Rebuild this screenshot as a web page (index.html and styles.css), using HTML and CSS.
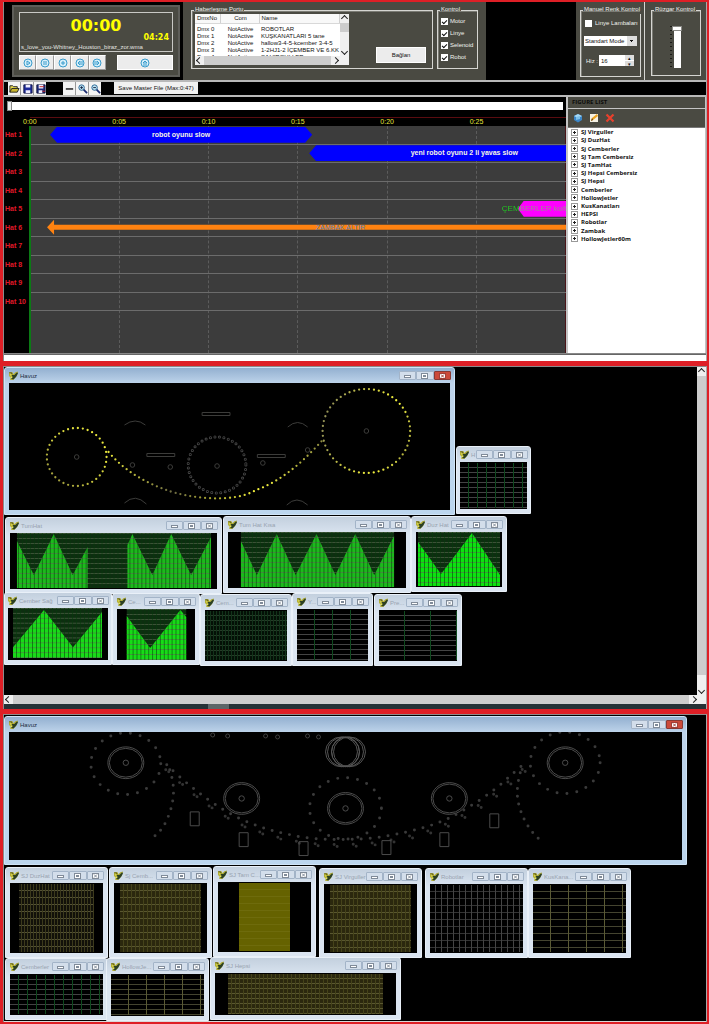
FILE: index.html
```html
<!DOCTYPE html>
<html lang="tr">
<head>
<meta charset="utf-8">
<meta name="viewport" content="width=device-width, initial-scale=1">
<title>Havuz Kontrol</title>
<link rel="stylesheet" href="styles.css">
</head>
<body>
<svg class="defs" aria-hidden="true">
  <symbol id="app" viewBox="0 0 10 9"><path d="M0 1l4 0 1 2 2-2 3-1-1 4-2 3-3 3-3-1 1-2-2-2z" fill="#b3af35"/><path d="M3 4l3 0 3-3 1 1-2 4-3 3-3-1 2-1z" fill="#2c4024"/><path d="M0 1l3 0 1 2-2 1z" fill="#6b6a1c"/><path d="M1 2l2 1-1 2zM2 6l2 0-2 2z" fill="#f0ee62"/></symbol>
  <symbol id="min" viewBox="0 0 7 6"><rect x="0.5" y="2.5" width="6" height="2" fill="#fff" stroke="currentColor"/></symbol>
  <symbol id="max" viewBox="0 0 7 6"><rect x="0.5" y="0.5" width="6" height="5" fill="#fff" stroke="currentColor"/><rect x="2.5" y="2.5" width="2" height="1" fill="none" stroke="currentColor"/></symbol>
  <symbol id="cls" viewBox="0 0 7 6"><rect x="0.5" y="0.5" width="6" height="5" fill="#fff" stroke="currentColor"/><path d="M2 1.500l3 3m0-3l-3 3" stroke="currentColor"/></symbol>
  <pattern id="mesh" width="4" height="5" patternUnits="userSpaceOnUse"><path d="M0 .5h4" stroke="#5a6a50" stroke-opacity=".6"/><path d="M.5 0v5" stroke="#063a0a" stroke-opacity=".55"/></pattern>
</svg>

<section class="screen editor">
  <header class="top">
    <div class="player-wrap">
      <div class="player">
        <div class="display">
          <output class="clock">00:00</output>
          <output class="total">04:24</output>
          <p class="track">s_love_you-Whitney_Houston_biraz_zor.wma</p>
        </div>
        <div class="transport">
          <div class="keys">
            <button aria-label="Play"><svg viewBox="0 0 10 10"><circle cx="5" cy="5" r="4"/><path d="M4 3l3 2-3 2z"/></svg></button>
            <button aria-label="Pause"><svg viewBox="0 0 10 10"><circle cx="5" cy="5" r="4"/><path d="M4 3v4M6 3v4"/></svg></button>
            <button aria-label="Stop"><svg viewBox="0 0 10 10"><circle cx="5" cy="5" r="4"/><path d="M4 4h2v2H4z"/></svg></button>
            <button aria-label="Previous"><svg viewBox="0 0 10 10"><circle cx="5" cy="5" r="4"/><path d="M5 3L3 5l2 2zM7 3v4"/></svg></button>
            <button aria-label="Next"><svg viewBox="0 0 10 10"><circle cx="5" cy="5" r="4"/><path d="M5 3l2 2-2 2zM3 3v4"/></svg></button>
          </div>
          <button class="eject" aria-label="Open track"><svg viewBox="0 0 10 10"><circle cx="5" cy="5" r="4"/><path d="M3 5l2-2 2 2zM3 7h4"/></svg></button>
        </div>
      </div>
    </div>

    <div class="panel comms">
      <fieldset class="group port">
        <legend>Haberleşme Portu</legend>
        <div class="port-body">
          <div class="listview">
            <div class="list-main">
              <table>
                <thead><tr><th class="c-no">DmxNo</th><th class="c-com">Com</th><th>Name</th></tr></thead>
                <tbody>
                  <tr><td>Dmx 0</td><td class="mid">NotActive</td><td>ROBOTLAR</td></tr>
                  <tr><td>Dmx 1</td><td class="mid">NotActive</td><td>KUŞKANATLARI 5 tane</td></tr>
                  <tr><td>Dmx 2</td><td class="mid">NotActive</td><td>hallow3-4-5-kcember 3-4-5</td></tr>
                  <tr><td>Dmx 3</td><td class="mid">NotActive</td><td>1-2HJ1-2 İÇEMBER VE 6.KK</td></tr>
                  <tr><td>Dmx 4</td><td class="mid">NotActive</td><td>SJ VIRGULLER</td></tr>
                </tbody>
              </table>
              <div class="vbar"><button class="up" aria-label="Up"></button><span class="vthumb"></span><button class="down" aria-label="Down"></button></div>
            </div>
            <div class="hbar"><button class="left" aria-label="Left"></button><span class="hthumb"></span><button class="right" aria-label="Right"></button></div>
          </div>
          <button class="connect">Bağlan</button>
        </div>
      </fieldset>
      <fieldset class="group control">
        <legend>Kontrol</legend>
        <label><input type="checkbox" checked>Motor</label>
        <label><input type="checkbox" checked>Linye</label>
        <label><input type="checkbox" checked>Selenoid</label>
        <label><input type="checkbox" checked>Robot</label>
      </fieldset>
    </div>

    <div class="panel manual">
      <fieldset class="group colour">
        <legend>Manuel Renk Kontrol</legend>
        <label><input type="checkbox">Linye Lambaları</label>
        <select aria-label="Mode"><option>Standart Mode</option></select>
        <div class="speed"><label for="hiz">Hiz :</label><span class="spin"><input id="hiz" type="text" value="16"><span class="steps"><button aria-label="Increase">▴</button><button aria-label="Decrease">▾</button></span></span></div>
      </fieldset>
    </div>
    <div class="panel wind">
      <fieldset class="group fan">
        <legend>Rüzgar Kontrol</legend>
        <span class="ticks"></span><input type="range" value="100" aria-label="Rüzgar Kontrol">
      </fieldset>
    </div>
  </header>

  <nav class="tools">
    <div class="toolset">
      <button aria-label="Open"><svg viewBox="0 0 12 12"><path d="M1 10V3h3l1 1h4v2" fill="#e6d94a" stroke="#222"/><path d="M1 10l2-4h8l-2 4z" fill="#c9b62e" stroke="#222"/></svg></button>
      <button aria-label="Save"><svg viewBox="0 0 12 12"><path d="M2 2h9v9H2z" fill="#1c2a9c" stroke="#111540"/><path d="M4 2h5v3H4zM4 8h5v3H4z" fill="#eef"/></svg></button>
      <button aria-label="Save as"><svg viewBox="0 0 12 12"><path d="M2 2h9v9H2z" fill="#1c2a7c" stroke="#111540"/><path d="M4 2h5v4H4zM4 8h4v3H4z" fill="#eef"/><path d="M5 4h5M8 9h3" stroke="#c22"/></svg></button>
    </div>
    <div class="toolset">
      <button aria-label="Line"><svg viewBox="0 0 12 12"><path d="M2 6.500h8" stroke="#111" stroke-width="1.500"/></svg></button>
      <button aria-label="Zoom in"><svg viewBox="0 0 12 12"><path d="M7 7l4 4" stroke="#1a2a70" stroke-width="2"/><circle cx="5" cy="5" r="3" fill="#bfe3f2" stroke="#23608f"/><path d="M3.500 5h3M5 3.500v3" stroke="#124"/></svg></button>
      <button aria-label="Zoom out"><svg viewBox="0 0 12 12"><path d="M7 7l4 4" stroke="#1a2a70" stroke-width="2"/><circle cx="5" cy="5" r="3" fill="#bfe3f2" stroke="#23608f"/><path d="M3.500 5h3" stroke="#124"/></svg></button>
    </div>
    <button class="save-master">Save Master File (Max:0:47)</button>
  </nav>

  <div class="work">
    <div class="timeline">
      <input class="seek" type="range" value="0" aria-label="Position">
      <div class="ruler"><span>0:00</span><span>0:05</span><span>0:10</span><span>0:15</span><span>0:20</span><span>0:25</span></div>
      <div class="lanes">
        <ol class="names"><li>Hat 1</li><li>Hat 2</li><li>Hat 3</li><li>Hat 4</li><li>Hat 5</li><li>Hat 6</li><li>Hat 7</li><li>Hat 8</li><li>Hat 9</li><li>Hat 10</li></ol>
        <div class="tracks">
          <div class="cols"><i></i><i></i><i></i><i></i><i></i><i></i></div>
          <div class="rows">
            <div class="row"><div class="clip blue first">robot oyunu slow</div></div>
            <div class="row"><div class="clip blue second">yeni robot oyunu 2 li yavas slow</div></div>
            <div class="row"></div>
            <div class="row"></div>
            <div class="row"><div class="clip-name">ÇEMBERLER kolt</div><div class="clip pink"></div></div>
            <div class="row"><div class="arrow"><span>ZAMBAK ALTIR</span></div></div>
            <div class="row"></div>
            <div class="row"></div>
            <div class="row"></div>
            <div class="row"></div>
          </div>
        </div>
      </div>
    </div>
    <aside class="figures">
      <h2>FIGURE LIST</h2>
      <div class="fig-tools">
        <button aria-label="Add"><svg viewBox="0 0 10 10"><path d="M1 3l4-2 4 2v4L5 9.500 1 7z" fill="#3b86c8"/><path d="M1 3l4-2 4 2-4 2z" fill="#a8daf5"/><path d="M3 4v3l4-1V3z" fill="#7cc0ea"/></svg></button>
        <button aria-label="Edit"><svg viewBox="0 0 10 10"><path d="M1 1h8v8H1z" fill="#f6f2e4"/><path d="M2 8l1-3 5-4 1 2-5 4z" fill="#eda321"/><path d="M2 8l1-3 1 2z" fill="#5a3a12"/></svg></button>
        <button aria-label="Delete"><svg viewBox="0 0 10 10"><path d="M1.500 1.500l7 7m0-7l-7 7" stroke="#e8402c" stroke-width="2.200"/></svg></button>
      </div>
      <ul class="tree">
        <li>SJ Virguller</li><li>SJ DuzHat</li><li>Sj Cemberler</li><li>SJ Tam Cembersiz</li><li>SJ TamHat</li><li>SJ Hepsi Cembersiz</li><li>SJ Hepsi</li><li>Cemberler</li><li>HollowJetler</li><li>KusKanatları</li><li>HEPSI</li><li>Robotlar</li><li>Zambak</li><li>HollowJetler60m</li>
      </ul>
    </aside>
  </div>
  <div class="white-strip"></div>
</section>

<section class="screen mdi-a">
  <div class="mdi-row">
    <div class="desk desk-a">
      <article class="win active a-pool">
        <header><svg class="ico"><use href="#app"/></svg><h3>Havuz</h3><div class="wb"><button aria-label="Minimize"><svg><use href="#min"/></svg></button><button aria-label="Maximize"><svg><use href="#max"/></svg></button><button class="x" aria-label="Close"><svg><use href="#cls"/></svg></button></div></header>
        <svg class="pane" viewBox="0 0 443 127" fill="none" stroke="#3c3c3a" preserveAspectRatio="none">
          <defs>
            <linearGradient id="ga" x1="0" y1="1" x2="1" y2="0"><stop offset="0" stop-color="#8f8c3c"/><stop offset=".6" stop-color="#d8d63c"/><stop offset="1" stop-color="#f4f23c"/></linearGradient>
            <linearGradient id="gb"><stop offset="0" stop-color="#e6e43a"/><stop offset=".3" stop-color="#6c6a42"/><stop offset=".48" stop-color="#a8a62e"/><stop offset=".7" stop-color="#f4f23c"/><stop offset="1" stop-color="#8a8840"/></linearGradient>
            <linearGradient id="gc" x1="0" x2="1" y1=".2" y2=".5"><stop offset="0" stop-color="#8a8858"/><stop offset=".5" stop-color="#d8d640"/><stop offset=".8" stop-color="#f4f23c"/><stop offset="1" stop-color="#b8b640"/></linearGradient>
          </defs>
          <g stroke-width="2.300" stroke-linecap="round" stroke-dasharray="0 5">
            <ellipse cx="68" cy="74" rx="30" ry="29" stroke="url(#ga)"/>
            <ellipse cx="359" cy="48" rx="44" ry="42" stroke="url(#gc)"/>
            <path d="M100 69C116 88 136 99 158 107S225 121 248 107C275 98 298 76 316 56" stroke="url(#gb)"/>
          </g>
          <g stroke-linecap="round" stroke-dasharray="0 4.550"><ellipse cx="209" cy="82" rx="29" ry="28" stroke="#4a4a4a" stroke-width="3"/><ellipse cx="209" cy="82" rx="29" ry="28" stroke="#000" stroke-width="1.400"/></g>
          <g><circle cx="68" cy="74" r="2.300"/><circle cx="124" cy="82" r="2.300"/><circle cx="162" cy="84" r="2.300"/><circle cx="209" cy="83" r="2.300"/><circle cx="255" cy="80" r="2.300"/><circle cx="300" cy="67" r="2.300"/><circle cx="359" cy="48" r="2.300"/></g>
          <path d="M194 29.500h28v3h-28zM138.500 70.500h28v3h-28zM249.500 71.500h28v3h-28zM116 42q11-8 21 0M280 44q10-9 20 0M116 120q11-10 22 1M279 122q10-10 21 0"/>
        </svg>
      </article>
      <article class="win a-mini">
        <header><svg class="ico"><use href="#app"/></svg><h3>H</h3><div class="wb"><button aria-label="Minimize"><svg><use href="#min"/></svg></button><button aria-label="Maximize"><svg><use href="#max"/></svg></button><button aria-label="Close"><svg><use href="#cls"/></svg></button></div></header>
        <div class="pane"><div class="mesh m-green9"></div></div>
      </article>
      <article class="win a-tum">
        <header><svg class="ico"><use href="#app"/></svg><h3>TumHat</h3><div class="wb"><button aria-label="Minimize"><svg><use href="#min"/></svg></button><button aria-label="Maximize"><svg><use href="#max"/></svg></button><button aria-label="Close"><svg><use href="#cls"/></svg></button></div></header>
        <svg class="pane" viewBox="0 0 208 56" preserveAspectRatio="none"><path d="M7 0h195v55H7z" fill="#0d2e10"/><path d="M7 55V8l17 34L44 1l19 41 15-28v41zM118 55V12l5-11 20 41 19-41 20 41 20-38v51z" fill="#1cba1c"/><path d="M7 0h195v55H7z" fill="url(#mesh)"/></svg>
      </article>
      <article class="win a-kisa">
        <header><svg class="ico"><use href="#app"/></svg><h3>Tum Hat Kısa</h3><div class="wb"><button aria-label="Minimize"><svg><use href="#min"/></svg></button><button aria-label="Maximize"><svg><use href="#max"/></svg></button><button aria-label="Close"><svg><use href="#cls"/></svg></button></div></header>
        <svg class="pane" viewBox="0 0 179 56" preserveAspectRatio="none"><path d="M13 0h154v55H13z" fill="#0d2e10"/><path d="M13 55V9l16 34L49 2l19 41L89 2l19 41 20-41 19 41 20-39v51z" fill="#1cba1c"/><path d="M13 0h154v55H13z" fill="url(#mesh)"/></svg>
      </article>
      <article class="win a-duz">
        <header><svg class="ico"><use href="#app"/></svg><h3>Duz Hat</h3><div class="wb"><button aria-label="Minimize"><svg><use href="#min"/></svg></button><button aria-label="Maximize"><svg><use href="#max"/></svg></button><button aria-label="Close"><svg><use href="#cls"/></svg></button></div></header>
        <svg class="pane" viewBox="0 0 86 55" preserveAspectRatio="none"><path d="M2 0h82v54H2z" fill="#0d2e10"/><path d="M2 54V10l23 32L56 1l28 42v11z" fill="#0be30f"/><path d="M2 0h82v54H2z" fill="url(#mesh)"/></svg>
      </article>
      <article class="win a-sag">
        <header><svg class="ico"><use href="#app"/></svg><h3>Cember Sağ</h3><div class="wb"><button aria-label="Minimize"><svg><use href="#min"/></svg></button><button aria-label="Maximize"><svg><use href="#max"/></svg></button><button aria-label="Close"><svg><use href="#cls"/></svg></button></div></header>
        <svg class="pane" viewBox="0 0 100 53" preserveAspectRatio="none"><path d="M5 0h89v51H5z" fill="#0d2e10"/><path d="M5 51V40L36 2l29 38L94 4v47z" fill="#17dc17"/><path d="M5 0h89v51H5z" fill="url(#mesh)"/></svg>
      </article>
      <article class="win a-ce">
        <header><svg class="ico"><use href="#app"/></svg><h3>Ce...</h3><div class="wb"><button aria-label="Minimize"><svg><use href="#min"/></svg></button><button aria-label="Maximize"><svg><use href="#max"/></svg></button><button aria-label="Close"><svg><use href="#cls"/></svg></button></div></header>
        <svg class="pane" viewBox="0 0 80 51" preserveAspectRatio="none"><path d="M10 0h61v51H10z" fill="#0d2e10"/><path d="M10 51V7l24 32L65 1l6 7v43z" fill="#17dc17"/><path d="M10 0h61v51H10z" fill="url(#mesh)"/></svg>
      </article>
      <article class="win a-cem">
        <header><svg class="ico"><use href="#app"/></svg><h3>Cem...</h3><div class="wb"><button aria-label="Minimize"><svg><use href="#min"/></svg></button><button aria-label="Maximize"><svg><use href="#max"/></svg></button><button aria-label="Close"><svg><use href="#cls"/></svg></button></div></header>
        <div class="pane"><div class="mesh m-dense"></div></div>
      </article>
      <article class="win a-y">
        <header><svg class="ico"><use href="#app"/></svg><h3>Y...</h3><div class="wb"><button aria-label="Minimize"><svg><use href="#min"/></svg></button><button aria-label="Maximize"><svg><use href="#max"/></svg></button><button aria-label="Close"><svg><use href="#cls"/></svg></button></div></header>
        <div class="pane"><div class="mesh m-green18"></div></div>
      </article>
      <article class="win a-pre">
        <header><svg class="ico"><use href="#app"/></svg><h3>Pre...</h3><div class="wb"><button aria-label="Minimize"><svg><use href="#min"/></svg></button><button aria-label="Maximize"><svg><use href="#max"/></svg></button><button aria-label="Close"><svg><use href="#cls"/></svg></button></div></header>
        <div class="pane"><div class="mesh m-green26"></div></div>
      </article>
    </div>
    <div class="vbar"><button class="up" aria-label="Up"></button><span class="vthumb tall"></span><button class="down" aria-label="Down"></button></div>
  </div>
  <div class="hbar wide"><button class="left" aria-label="Left"></button><span class="hthumb"></span><button class="right" aria-label="Right"></button></div>
  <div class="taskbar"></div>
</section>

<section class="screen mdi-b">
  <div class="desk desk-b">
    <article class="win active b-pool">
      <header><svg class="ico"><use href="#app"/></svg><h3>Havuz</h3><div class="wb"><button aria-label="Minimize"><svg><use href="#min"/></svg></button><button aria-label="Maximize"><svg><use href="#max"/></svg></button><button class="x" aria-label="Close"><svg><use href="#cls"/></svg></button></div></header>
      <svg class="pane" viewBox="0 0 674 129" fill="none" stroke="#4c4c4c" preserveAspectRatio="none">
        <defs>
          <g id="ring"><ellipse rx="18" ry="16"/><ellipse rx="16.500" ry="14.500"/><circle r="2.700"/></g>
          <path id="sweep" d="M158 33C166 41 176 50 186 58S215 80 235 89 270 101 288 105 350 110 377 105 425 95 444 85 486 60 501 45L516 32"/>
        </defs>
        <use href="#ring" x="117" y="31"/><use href="#ring" x="233" y="67"/><use href="#ring" x="337" y="77"/><use href="#ring" x="441" y="67"/><use href="#ring" x="557" y="31"/>
        <g stroke="#565656"><ellipse cx="333" cy="20" rx="16" ry="15"/><ellipse cx="335" cy="20" rx="16" ry="15"/><ellipse cx="337" cy="20" rx="14" ry="15"/><ellipse cx="339" cy="20" rx="16" ry="15"/><ellipse cx="341" cy="20" rx="16" ry="15"/></g>
        <g stroke="#3a3a3a" stroke-width="3" stroke-linecap="round" stroke-dasharray="0 10">
          <ellipse cx="117" cy="32" rx="35" ry="31"/><ellipse cx="557" cy="31" rx="35" ry="31"/><ellipse cx="337" cy="77" rx="36" ry="31"/>
          <use href="#sweep" stroke-dasharray="0 9"/>
          <path d="M161 38C166 54 166 66 161 81S150 102 142 108M512 41C507 60 509 70 513 81S524 102 531 108" stroke-dasharray="0 8"/>
        </g>
        <g stroke="#333" stroke-width="3" stroke-linecap="round"><use href="#sweep" y="5" x="-1" stroke-dasharray="0 19"/><use href="#sweep" y="7" x="2" stroke-dasharray="0 19"/></g>
        <path d="M181.500 80.500h9v14h-9zM230.500 101.500h9v14h-9zM290.500 110.500h9v14h-9zM373.500 109.500h9v14h-9zM431.500 101.500h9v14h-9zM481.500 82.500h9v14h-9z"/>
        <g stroke="#3f3f3f"><circle cx="204" cy="3" r="2"/><circle cx="219" cy="4" r="2"/><circle cx="257" cy="4" r="2"/><circle cx="269" cy="5" r="2"/><circle cx="299" cy="4" r="2"/><circle cx="310" cy="5" r="2"/></g>
      </svg>
    </article>
    <article class="win b-duz">
      <header><svg class="ico"><use href="#app"/></svg><h3>SJ DuzHat</h3><div class="wb"><button aria-label="Minimize"><svg><use href="#min"/></svg></button><button aria-label="Maximize"><svg><use href="#max"/></svg></button><button aria-label="Close"><svg><use href="#cls"/></svg></button></div></header>
      <div class="pane in10"><div class="mesh m-olive3"></div></div>
    </article>
    <article class="win b-cemb">
      <header><svg class="ico"><use href="#app"/></svg><h3>Sj Cemb...</h3><div class="wb"><button aria-label="Minimize"><svg><use href="#min"/></svg></button><button aria-label="Maximize"><svg><use href="#max"/></svg></button><button aria-label="Close"><svg><use href="#cls"/></svg></button></div></header>
      <div class="pane in6"><div class="mesh m-olive"></div></div>
    </article>
    <article class="win b-tam">
      <header><svg class="ico"><use href="#app"/></svg><h3>SJ Tam C...</h3><div class="wb"><button aria-label="Minimize"><svg><use href="#min"/></svg></button><button aria-label="Maximize"><svg><use href="#max"/></svg></button><button aria-label="Close"><svg><use href="#cls"/></svg></button></div></header>
      <div class="pane in21"><div class="mesh m-solid"></div></div>
    </article>
    <article class="win b-vir">
      <header><svg class="ico"><use href="#app"/></svg><h3>SJ Virguller</h3><div class="wb"><button aria-label="Minimize"><svg><use href="#min"/></svg></button><button aria-label="Maximize"><svg><use href="#max"/></svg></button><button aria-label="Close"><svg><use href="#cls"/></svg></button></div></header>
      <div class="pane in6"><div class="mesh m-olive"></div></div>
    </article>
    <article class="win b-rob">
      <header><svg class="ico"><use href="#app"/></svg><h3>Robotlar</h3><div class="wb"><button aria-label="Minimize"><svg><use href="#min"/></svg></button><button aria-label="Maximize"><svg><use href="#max"/></svg></button><button aria-label="Close"><svg><use href="#cls"/></svg></button></div></header>
      <div class="pane"><div class="mesh m-gray6"></div></div>
    </article>
    <article class="win b-kus">
      <header><svg class="ico"><use href="#app"/></svg><h3>KusKana...</h3><div class="wb"><button aria-label="Minimize"><svg><use href="#min"/></svg></button><button aria-label="Maximize"><svg><use href="#max"/></svg></button><button aria-label="Close"><svg><use href="#cls"/></svg></button></div></header>
      <div class="pane"><div class="mesh m-olive18"></div></div>
    </article>
    <article class="win b-cem">
      <header><svg class="ico"><use href="#app"/></svg><h3>Cemberler</h3><div class="wb"><button aria-label="Minimize"><svg><use href="#min"/></svg></button><button aria-label="Maximize"><svg><use href="#max"/></svg></button><button aria-label="Close"><svg><use href="#cls"/></svg></button></div></header>
      <div class="pane"><div class="mesh m-green9"></div></div>
    </article>
    <article class="win b-hol">
      <header><svg class="ico"><use href="#app"/></svg><h3>HollowJe...</h3><div class="wb"><button aria-label="Minimize"><svg><use href="#min"/></svg></button><button aria-label="Maximize"><svg><use href="#max"/></svg></button><button aria-label="Close"><svg><use href="#cls"/></svg></button></div></header>
      <div class="pane"><div class="mesh m-olive18 low"></div></div>
    </article>
    <article class="win b-hep">
      <header><svg class="ico"><use href="#app"/></svg><h3>SJ Hepsi</h3><div class="wb"><button aria-label="Minimize"><svg><use href="#min"/></svg></button><button aria-label="Maximize"><svg><use href="#max"/></svg></button><button aria-label="Close"><svg><use href="#cls"/></svg></button></div></header>
      <div class="pane in13"><div class="mesh m-olive low"></div></div>
    </article>
  </div>
  <div class="base-strip"></div>
</section>
</body>
</html>
```
FILE: styles.css
```css
*{box-sizing:border-box}
body{margin:0;padding:2px 2px 1px 3px;background:#de1f26;font:6px/8px "Liberation Sans",Arial,sans-serif;color:#111;display:flex;flex-direction:column;gap:5px}
button,input,select{font:inherit;margin:0;padding:0;border:0;border-radius:0;color:inherit}
button{display:flex;align-items:center;justify-content:center}
h2,h3,p,ol,ul{margin:0;padding:0;list-style:none;font:inherit}
.defs{position:absolute;width:0;height:0}
.screen{border-left:1px solid #8b8b8b;border-right:1px solid #a9a9a9;background:#000}

/* top panels */
.top{display:flex;height:78px}
.player-wrap{width:179px;padding:3px 3px 3px 8px}
.player{height:72px;background:#4a4a42;border:2px solid #5e5e59;padding:5px;display:flex;flex-direction:column;gap:3px}
.display{height:40px;border:1px solid #c9c9c5;display:flex;flex-direction:column;color:#ff0;font-family:"DejaVu Sans",Verdana,sans-serif;font-weight:bold}
.clock{font-size:16px;line-height:19px;height:20px;padding-top:3px;text-align:center}
.total{font-size:8px;line-height:10px;text-align:right;padding-right:3px}
.track{font:6px/8px "Liberation Sans",Arial,sans-serif;color:#e4e4e0;padding-left:1px;white-space:nowrap}
.transport{display:flex;justify-content:space-between;height:18px}
.keys{display:flex;width:87px;background:#8c8c88}
.keys button{flex:1;border:1px solid;border-color:#fff #9a9a9a #9a9a9a #fff;background:#ececec}
.eject{width:56px;background:#ececec;border:1px solid #fff}
.transport svg{width:10px;height:10px;fill:#d6effa;stroke:#3a9ccc;stroke-width:1}
.panel{background:#4a4a42;color:#f2f2ee}
.group{min-width:0;margin:0;padding:0;border:1px solid #d6d6d2;box-shadow:inset 1px 1px #7b7b74}
.group legend{padding:0 1px;margin-left:2px;height:8px;line-height:7px;white-space:nowrap}
.comms{display:flex;gap:4px;width:303px;padding:4px 8px 11px;margin-right:auto}
.port{flex:1}
.port-body{display:flex;justify-content:space-between;align-items:flex-end;padding:0 6px 0 3px}
.listview{width:154px;height:51px;background:#fff;color:#111;overflow:hidden}
.list-main{display:flex;height:42px;overflow:hidden}
table{flex:1;border-collapse:collapse;table-layout:fixed;width:145px}
th,td{padding:0 0 0 2px;font-weight:normal;text-align:left;white-space:nowrap;height:7px;line-height:7px}
th{height:9px;border-right:1px solid #d0d0d0;border-bottom:1px solid #d8d8d8;background:#f8f8f8}
tbody tr:first-child td{height:9px;padding-top:2px}
.c-no{width:25px}
.c-com{width:39px;text-align:center}
.mid{text-align:center}
.vbar{width:9px;flex:none;display:flex;flex-direction:column;background:#f0f0f0}
.vbar button,.hbar button{width:9px;height:9px;background:#f0f0f0;flex:none}
.vbar button::before,.hbar button::before{content:"";width:4px;height:4px;border-left:1px solid #222;border-top:1px solid #222}
.up::before{transform:rotate(45deg)}
.down::before{transform:rotate(225deg)}
.left::before{transform:rotate(-45deg)}
.right::before{transform:rotate(135deg)}
.vthumb{background:#cdcdcd;height:9px;margin-bottom:auto}
.vthumb.tall{height:299px}
.hbar{height:9px;display:flex;background:#f0f0f0}
.hthumb{background:#cdcdcd;flex:1}
.listview .hbar{padding-right:9px}
.connect{width:50px;height:16px;background:#ececec;color:#111;margin-bottom:2px;border:1px solid #fff}
.control{width:41px}
.control label,.colour>label{display:flex;align-items:center;gap:2px;height:12px;padding-left:3px;white-space:nowrap}
.control label:first-of-type{margin-top:1px}
input[type=checkbox]{appearance:none;width:7px;height:7px;background:#fff;display:grid;place-items:center;flex:none}
input[type=checkbox]:checked::after{content:"";width:4px;height:2px;border-left:1px solid #111;border-bottom:1px solid #111;transform:rotate(-45deg)}
.manual{width:69px;padding:4px 3px 3px 4px;border-right:1px solid #d6d6d2}
.colour{height:71px}
.colour>label{height:18px;padding-left:4px;gap:3px}
.colour select{appearance:none;width:53px;height:10px;margin:4px 0 9px 3px;display:block;color:#111;padding-left:1px;background:linear-gradient(#111,#111) 46px 4px/3px 1px no-repeat,linear-gradient(#111,#111) 47px 5px/1px 1px no-repeat,linear-gradient(90deg,#fff 43px,#ddd 43px)}
.speed{display:flex;align-items:center;padding:0 6px 0 5px;justify-content:space-between}
.spin{display:flex;width:35px;height:11px;background:#fff;color:#111}
.spin input{width:26px;padding-left:2px}
.steps{flex:1;display:flex;flex-direction:column;gap:1px}
.steps button{flex:1;font-size:5px;line-height:4px;background:#ddd}
.wind{width:61px;padding:4px 5px 4px 6px}
.fan{height:70px;display:flow-root}
.fan input,.ticks{display:inline-block;vertical-align:top;margin-top:12px}
.ticks{width:2px;height:42px;margin-left:18px;background:repeating-linear-gradient(#1c1c18 0 1px,#4a4a42 1px 4px)}
.fan input{appearance:none;writing-mode:vertical-lr;direction:rtl;width:10px;height:42px;background:linear-gradient(90deg,transparent 2px,#fff 2px 9px,transparent 9px)}
.fan input::-webkit-slider-thumb{appearance:none;width:10px;height:5px;background:#fff;border:1px solid #8a8a86}

/* toolbar */
.tools{display:flex;gap:17px;height:17px;border-top:2px solid #b9b9b9;border-bottom:2px solid #b9b9b9;padding-left:4px}
.toolset{display:flex;gap:1px;background:#999}
.toolset button{width:12px;background:#f4f4f4}
.toolset svg{width:11px;height:11px}
.save-master{width:84px;background:#f1f1f1;height:12px;white-space:nowrap;margin-left:-4px}

/* timeline */
.work{display:flex;height:257px;border-bottom:1px solid #888}
.timeline{flex:1;min-width:0;background:#000;display:flex;flex-direction:column}
.seek{appearance:none;height:10px;margin:4px 3px 6px;background:linear-gradient(#fff,#fff) 0 1px/100% 8px no-repeat}
.seek::-webkit-slider-thumb{appearance:none;width:5px;height:10px;background:#eee;border:1px solid #888}
.ruler{border-top:1px solid #5a0c10;height:9px;margin-left:26px;display:grid;grid-template-columns:repeat(6,1fr);color:#e6e63a;font-size:7px}
.ruler span{margin-left:-7px}
.lanes{flex:1;display:flex;min-height:0}
.names{width:25px;color:#e01828;font-weight:bold;font-size:7px;height:185px;display:grid;grid-template-rows:repeat(10,1fr);align-items:center;padding-left:1px;white-space:nowrap}
.tracks{flex:1;min-width:0;display:grid;border-left:2px solid #0b7a14;background:#3c3c3c;overflow:hidden}
.cols,.rows{grid-area:1/1}
.cols{display:grid;grid-template-columns:repeat(6,1fr)}
.cols i{border-right:1px dashed #5c5c5c}
.cols i:last-child{border-right:1px solid #4a1418}
.rows{height:185px;display:grid;grid-template-rows:repeat(10,1fr);min-width:0}
.row{border-bottom:1px solid #6c6c6c;display:flex;align-items:center;min-width:0}
.clip{height:16px;flex:none;font-weight:bold;font-size:7px;line-height:16px;text-align:center;color:#f6f6e4}
.blue{background:#00f}
.first{margin-left:19px;width:49%;clip-path:polygon(0 50%,7px 0,calc(100% - 7px) 0,100% 50%,calc(100% - 7px) 100%,7px 100%)}
.second{margin-left:52%;width:58%;clip-path:polygon(0 50%,7px 0,100% 0,100% 100%,7px 100%)}
.clip-name{flex:none;width:64px;margin-left:88%;margin-right:-48px;font-size:8px;white-space:nowrap;position:relative;z-index:1;background:linear-gradient(90deg,#1fd01f 18px,#9a8c90 18px);background-clip:text;color:transparent}
.pink{width:64px;background:#f0f;clip-path:polygon(0 50%,6px 0,100% 0,100% 100%,6px 100%)}
.arrow{flex:1;margin-left:3%;height:15px;text-align:center;background:#ff8210;clip-path:polygon(0 50%,7px 0,7px 5px,100% 5px,100% 10px,7px 10px,7px 100%,0 50%);color:#4f7fb8;font-size:7px;line-height:15px;padding-left:68px}

/* figure list */
.figures{width:140px;background:#4a4a42;border:1px solid #c4c4c4;border-width:0 1px 0 2px;display:flex;flex-direction:column}
.figures h2{height:12px;border-bottom:1px solid #c4c4c4;font:bold 6px/11px "Open Sans","Noto Sans",sans-serif;padding-left:4px;color:#0c0c0a}
.fig-tools{display:flex;gap:6px;padding:4px 5px;height:18px}
.fig-tools button{background:none;width:10px;height:10px}
.fig-tools svg{width:10px;height:10px}
.tree{flex:1;background:#fff;border-top:1px solid #777;font:bold 6px/8px "Open Sans","Noto Sans",sans-serif;display:grid;grid-template-rows:repeat(14,1fr);padding-bottom:110px}
.tree li{display:flex;align-items:center;gap:3px;padding-left:3px;white-space:nowrap}
.tree li::before{content:"";width:5px;height:5px;border:1px solid #999;background:linear-gradient(#222,#222) center/3px 1px no-repeat,linear-gradient(#222,#222) center/1px 3px no-repeat}
.white-strip{height:7px;background:#fff;border-top:1px solid #666}

/* MDI areas */
.mdi-a,.mdi-b{border-top:1px solid #8b8b8b}
.mdi-row{display:flex}
.desk{position:relative;background:#000;overflow:hidden;flex:1}
.desk-a{height:328px}
.desk-b{height:306px}
.hbar.wide{padding-right:8px}
.taskbar{height:5px;background:linear-gradient(90deg,#263236 29%,#5c6668 29% 32%,#263236 32%)}
.base-strip{height:1px;background:#d8d8d8}
.win{position:absolute;display:flex;flex-direction:column;padding:0 4px 4px;background:linear-gradient(#c3d0de,#dbe5f1 18px);border:1px solid #e9f0f8;border-radius:3px 3px 0 0;color:#98a3b0}
.win.active{background:linear-gradient(#93b0d0,#bdd3ea 15px,#bcd6ee);border-color:#cfe4f7;color:#1c2c40}
.win header{height:15px;flex:none;display:flex;align-items:center;gap:2px}
.win h3{flex:1;min-width:0;white-space:nowrap}
.ico{width:9px;height:9px;flex:none}
.wb{display:flex;flex:none;width:52px;margin-right:-1px}
.wb button{flex:1;height:9px;border:1px solid #a3b4c8;border-radius:1px;background:#d3deeb;color:#808b99}
.wb svg{width:7px;height:6px}
.wb .x{background:#cc4a3a;border-color:#8a3a34;color:#a04038}
.pane{flex:1;min-height:0;width:100%;background:#000;display:flex}
.mesh{flex:1;margin:1px 0}
.in6{padding:0 6px}.in10{padding:0 9px}.in13{padding:0 13px}.in21{padding:0 21px}
.m-green9,.m-green18,.m-green26,.m-dense,.m-olive3,.m-olive,.m-gray6,.m-olive18{
  --v:#0f4a1e;--h:#444;--x:9px;--y:5px;
  background:linear-gradient(90deg,transparent calc(100% - 1px),var(--v) 0) 0 0/var(--x) 100%,linear-gradient(transparent calc(100% - 1px),var(--h) 0) 0 0/100% var(--y)}
.m-green18{--x:18px}
.m-green26{--x:26px}
.m-dense{--x:3px;--h:#263c28;--v:#12331a;background-color:#041006}
.m-olive3{--x:3px;--y:7px;--v:#3c3a1c;--h:#555336;background-color:#12110a}
.m-olive{--x:4px;--y:7px;--v:#45431a;--h:#5a5830;background-color:#2b280e}
.m-gray6{--x:6px;--y:7px;--v:#444;--h:#333}
.m-olive18{--x:18px;--y:7px;--v:#5a5a34;--h:#444430}
.low{--y:5px}
.m-solid{background:repeating-linear-gradient(#656200 0 6px,#6e6b0c 6px 7px)}

/* window placement on the two desktops */
.a-pool{left:0;top:0;width:451px;height:148px}
.a-mini{left:452px;top:79px;width:75px;height:68px;padding:0 3px 4px}
.a-tum{left:1px;top:150px;width:217px;height:77px}
.a-kisa{left:219px;top:149px;width:188px;height:77px}
.a-duz{left:407px;top:149px;width:96px;height:76px}
.a-sag{left:0;top:225px;width:108px;height:73px;padding:0 3px 4px}
.a-ce{left:108px;top:226px;width:88px;height:72px}
.a-cem{left:196px;top:227px;width:92px;height:72px}
.a-y{left:288px;top:226px;width:81px;height:73px}
.a-pre{left:370px;top:227px;width:88px;height:72px}
.b-pool{left:0;top:1px;width:683px;height:149px}
.b-duz{left:1px;top:152px;width:103px;height:91px}
.b-cemb{left:105px;top:152px;width:103px;height:91px}
.b-tam{left:209px;top:151px;width:103px;height:91px}
.b-vir{left:315px;top:153px;width:103px;height:90px}
.b-rob{left:421px;top:153px;width:103px;height:90px}
.b-kus{left:524px;top:153px;width:103px;height:90px}
.b-cem{left:1px;top:243px;width:103px;height:62px}
.b-hol{left:102px;top:243px;width:103px;height:63px}
.b-hep{left:206px;top:242px;width:191px;height:63px}
```
